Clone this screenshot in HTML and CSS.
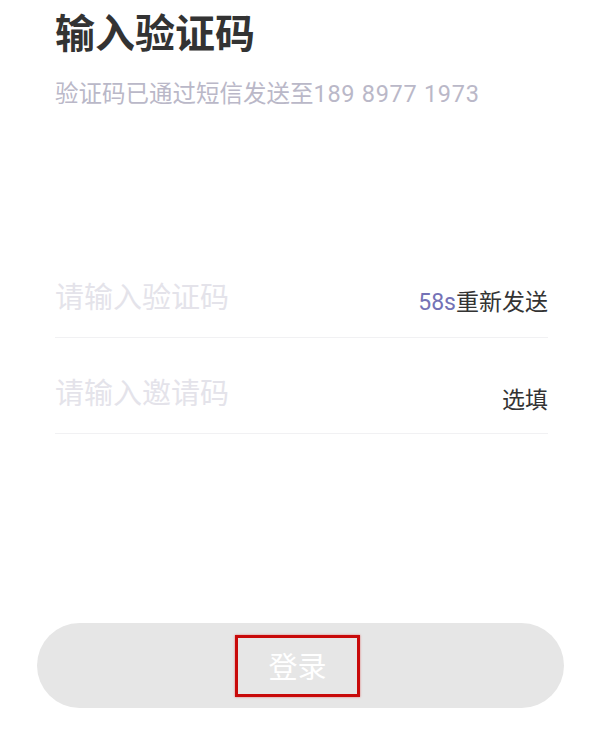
FILE: index.html
```html
<!DOCTYPE html>
<html lang="zh-CN">
<head>
<meta charset="utf-8">
<title>输入验证码</title>
<link rel="stylesheet" href="styles.css">
</head>
<body>
<div class="page">
  <main class="content">
    <h1 class="title">输入验证码</h1>
    <p class="subtitle">验证码已通过短信发送至<span class="phone">189 8977 1973</span></p>
    <div class="fields">
      <div class="field">
        <span class="placeholder">请输入验证码</span>
        <span class="action"><span class="countdown">58s</span>重新发送</span>
      </div>
      <div class="field">
        <span class="placeholder">请输入邀请码</span>
        <span class="action">选填</span>
      </div>
    </div>
  </main>
  <div class="footer">
    <button class="login" type="button"><span class="login-label">登录</span></button>
  </div>
</div>
</body>
</html>
```
FILE: styles.css
```css
* { box-sizing: border-box; }
html, body {
  margin: 0;
  padding: 0;
  background: #ffffff;
}
body {
  font-family: "Noto Sans CJK SC", "Noto Sans", sans-serif;
  width: 600px;
  height: 750px;
  overflow: hidden;
}
.page {
  display: flex;
  flex-direction: column;
  height: 750px;
}
.content {
  padding: 0 52px 0 55px;
}
.title {
  margin: 0;
  padding-top: 4px;
  font-size: 40px;
  line-height: 54px;
  font-weight: 700;
  color: #333333;
}
.subtitle {
  margin: 19px 0 0 0;
  font-size: 23.5px;
  line-height: 30px;
  color: #bab8c8;
}
.phone {
  font-family: "Roboto", "Noto Sans", sans-serif;
  letter-spacing: 0.7px;
}
.fields {
  margin-top: 133px;
  display: flex;
  flex-direction: column;
}
.field {
  display: flex;
  justify-content: space-between;
  align-items: center;
  height: 96px;
  padding-top: 20px;
  border-bottom: 1px solid #f1f1f3;
}
.placeholder {
  font-size: 29px;
  color: #e4e3ea;
  line-height: 40px;
  margin-top: -10px;
}
.action {
  font-size: 23px;
  color: #333333;
  line-height: 32px;
  padding-top: 4px;
}
.countdown {
  font-family: "Roboto", "Noto Sans", sans-serif;
  color: #7472b6;
}
.footer {
  margin-top: auto;
  padding: 0 36px 42px 37px;
}
.login {
  display: flex;
  align-items: center;
  justify-content: center;
  width: 100%;
  height: 85px;
  border: 0;
  border-radius: 43px;
  background: #e6e6e6;
  padding: 0;
  font-family: "Noto Sans CJK SC", sans-serif;
  cursor: pointer;
}
.login-label {
  display: flex;
  align-items: center;
  justify-content: center;
  width: 125px;
  height: 62px;
  border: 3px solid #c80a0a;
  box-shadow: 0 0 2px rgba(220, 0, 0, 0.5);
  color: #ffffff;
  font-size: 29px;
  line-height: 1;
  margin-left: -6px;
}
```
